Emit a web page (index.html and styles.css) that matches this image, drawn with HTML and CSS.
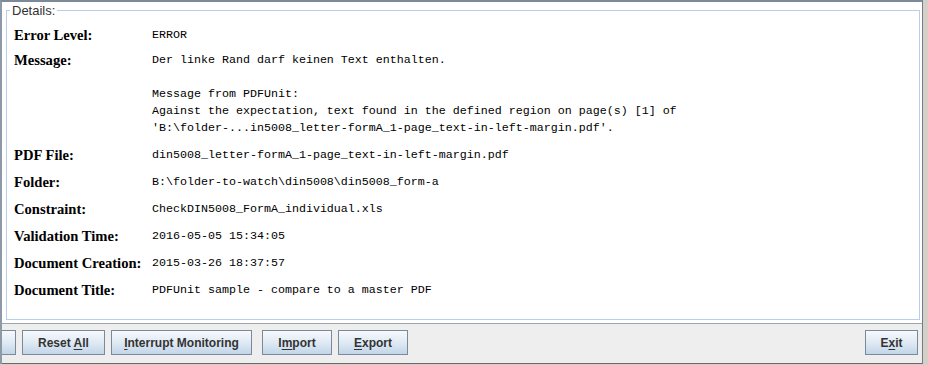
FILE: index.html
```html
<!DOCTYPE html>
<html lang="en">
<head>
    <meta charset="UTF-8">
    <title>PDFUnit Monitor - Details</title>
    <link rel="stylesheet" href="styles.css">
</head>
<body>

<div class="window">
  <div class="panel">
    <fieldset class="details">
      <legend>Details:</legend>
      <div class="rows">
        <div class="label">Error Level:</div>
        <div class="value">ERROR</div>

        <div class="label">Message:</div>
        <div class="value">Der linke Rand darf keinen Text enthalten.

Message from PDFUnit:
Against the expectation, text found in the defined region on page(s) [1] of
'B:\folder-...in5008_letter-formA_1-page_text-in-left-margin.pdf'.</div>

        <div class="label">PDF File:</div>
        <div class="value">din5008_letter-formA_1-page_text-in-left-margin.pdf</div>

        <div class="label">Folder:</div>
        <div class="value">B:\folder-to-watch\din5008\din5008_form-a</div>

        <div class="label">Constraint:</div>
        <div class="value">CheckDIN5008_FormA_individual.xls</div>

        <div class="label">Validation Time:</div>
        <div class="value">2016-05-05 15:34:05</div>

        <div class="label">Document Creation:</div>
        <div class="value">2015-03-26 18:37:57</div>

        <div class="label">Document Title:</div>
        <div class="value">PDFUnit sample - compare to a master PDF</div>
      </div>
    </fieldset>
  </div>

  <div class="toolbar">
    <button class="btn btn-cut"></button>
    <button class="btn btn-reset">Reset <u>A</u>ll</button>
    <button class="btn btn-interrupt"><u>I</u>nterrupt Monitoring</button>
    <button class="btn btn-import">I<u>m</u>port</button>
    <button class="btn btn-export"><u>E</u>xport</button>
    <span class="spacer"></span>
    <button class="btn btn-exit">E<u>x</u>it</button>
  </div>
</div>

</body>
</html>
```

FILE: styles.css
```css
/* page + outer frame */
body {
	margin: 0;
	width: 928px;
	height: 365px;
	overflow: hidden;
	background: #d4d0c8;
	font-family: "Liberation Sans", Arial, sans-serif;
}
.window {
	display: flex;
	flex-direction: column;
	width: 920px;
	height: 362px;
	border-top: 2px solid #7b8a99;
	border-left: 2px solid #8d99a6;
	border-right: 1px solid #6f7d8b;
	background: #eeeeee;
	overflow: hidden;
}

/* white details area */
.panel {
	display: flex;
	height: 321px;
	box-sizing: border-box;
	padding: 1px 2px 3px 4px;
	background: #fff;
}
.details {
	flex: 1;
	margin: 0;
	min-width: 0;
	padding: 8px 7px 0;
	border: 1px solid #b8cfe5;
}
.details legend {
	margin-left: -4px;
	padding: 0 2px;
	font-size: 13px;
	line-height: 15px;
	color: #333;
}
.rows {
	display: grid;
	grid-template-columns: 138px 1fr;
	grid-template-rows: 16px;
	row-gap: 9px;
}
.label {
	font-family: "Liberation Serif", "Times New Roman", serif;
	font-weight: bold;
	font-size: 14.6px;
	line-height: 18px;
	color: #000;
}
.value {
	font-family: "Liberation Mono", "Courier New", monospace;
	font-size: 11.67px;
	line-height: 17px;
	padding-top: 1px;
	color: #000;
	white-space: pre;
}

/* button bar */
.toolbar {
	flex: 1;
	display: flex;
	align-items: flex-start;
	gap: 6px;
	padding: 6px 4px 0 0;
	border-top: 1px solid #9da6af;
	border-bottom: 1px solid #6b6b6b;
}
.spacer {
	flex: 1;
}
.btn {
	height: 25px;
	padding: 0;
	border: 1px solid #7a8a99;
	border-radius: 0;
	background: linear-gradient(#f7f9fc, #dde8f3 55%, #c2d5e9);
	font-family: "Liberation Sans", Arial, sans-serif;
	font-weight: bold;
	font-size: 12px;
	color: #333;
	text-align: center;
}
.btn u {
	text-underline-offset: 2px;
}
.btn-cut {
	width: 40px;
	margin-left: -26px;
}
.btn-reset {
	width: 83px;
}
.btn-interrupt {
	width: 141px;
}
.btn-import {
	width: 70px;
	margin-left: 4px;
}
.btn-export {
	width: 70px;
}
.btn-exit {
	width: 53px;
}
```
